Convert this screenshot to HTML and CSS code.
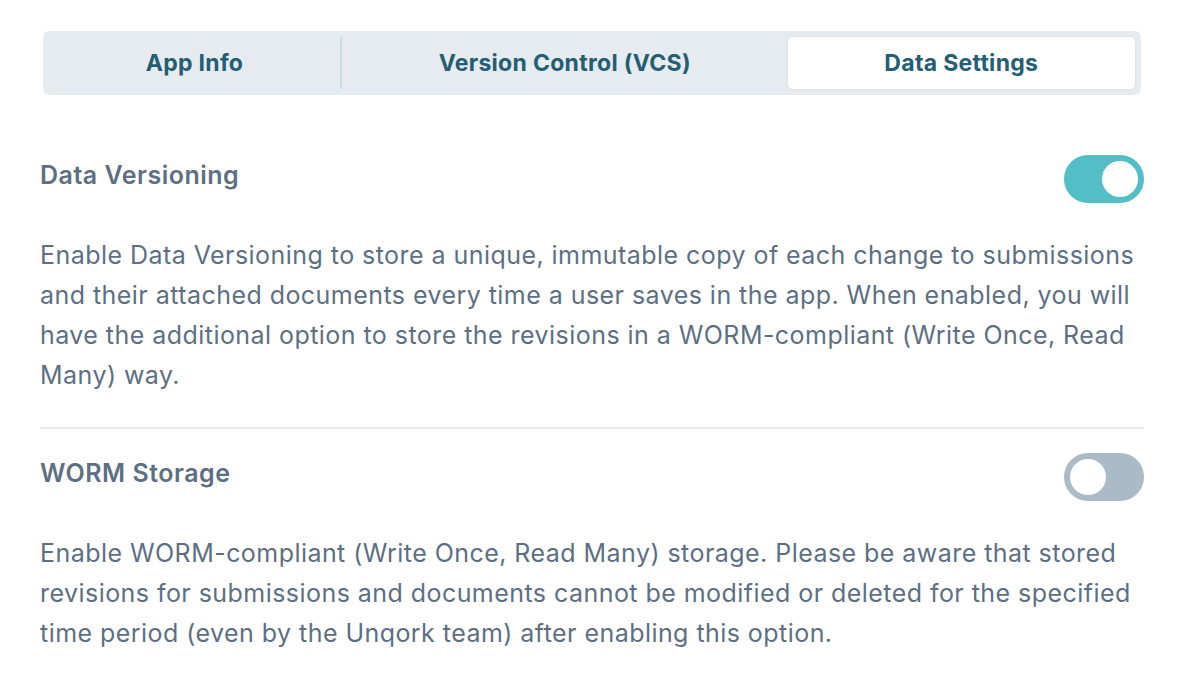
FILE: index.html
```html
<!DOCTYPE html>
<html lang="en">
<head>
    <meta charset="UTF-8">
    <meta name="viewport" content="width=device-width, initial-scale=1.0">
    <title>Data Settings</title>
    <link rel="stylesheet" href="styles.css">
</head>
<body>
    <div class="tabs">
        <div class="tab">App Info</div>
        <div class="divider"></div>
        <div class="tab">Version Control (VCS)</div>
        <div class="tab active">Data Settings</div>
    </div>

    <section class="setting">
        <div class="setting-row">
            <h2>Data Versioning</h2>
            <span class="toggle on"><span class="knob"></span></span>
        </div>
        <p>Enable Data Versioning to store a unique, immutable copy of each change to submissions and their attached documents every time a user saves in the app. When enabled, you will have the additional option to store the revisions in a WORM-compliant (Write Once, Read Many) way.</p>
    </section>

    <hr>

    <section class="setting">
        <div class="setting-row">
            <h2>WORM Storage</h2>
            <span class="toggle"><span class="knob"></span></span>
        </div>
        <p>Enable WORM-compliant (Write Once, Read Many) storage. Please be aware that stored revisions for submissions and documents cannot be modified or deleted for the specified time period (even by the Unqork team) after enabling this option.</p>
    </section>
</body>
</html>
```

FILE: styles.css
```css
body {
    font-family: Inter, "Noto Sans", sans-serif;
    margin: 0;
    padding: 31px 40px 0;
    background: #fff;
    color: #5d6f83;
}

.tabs {
    display: flex;
    align-items: center;
    margin: 0 3px;
    padding: 6px;
    background-color: #e6ebef;
    border-radius: 6px;
}

.tab {
    flex: 1 1 auto;
    height: 52px;
    line-height: 52px;
    text-align: center;
    font-size: 23px;
    font-weight: 700;
    letter-spacing: 0.3px;
    color: #255d73;
    border-radius: 5px;
}

.tab.active {
    background-color: #fff;
    box-shadow: 0 0 2px rgba(120, 140, 160, 0.25);
}

.divider {
    width: 2px;
    height: 52px;
    background-color: #c6dbe3;
}

.setting-row {
    display: flex;
    justify-content: space-between;
    align-items: center;
    height: 48px;
}

.setting:first-of-type {
    margin-top: 60px;
}

h2 {
    margin: 0 0 8px;
    font-size: 25px;
    font-weight: 600;
    letter-spacing: 0.5px;
    color: #5d6f83;
}

p {
    margin: 32px 0 0;
    font-size: 25px;
    line-height: 40px;
    letter-spacing: 0.45px;
}

hr {
    border: none;
    border-top: 2px solid #e7ebef;
    margin: 32px 0 24px;
}

.toggle {
    display: flex;
    align-items: center;
    width: 80px;
    height: 48px;
    padding: 6px;
    box-sizing: border-box;
    border-radius: 24px;
    background-color: #abbac7;
}

.toggle.on {
    justify-content: flex-end;
    background-color: #52bec5;
}

.knob {
    width: 36px;
    height: 36px;
    border-radius: 50%;
    background-color: #fff;
}
```
